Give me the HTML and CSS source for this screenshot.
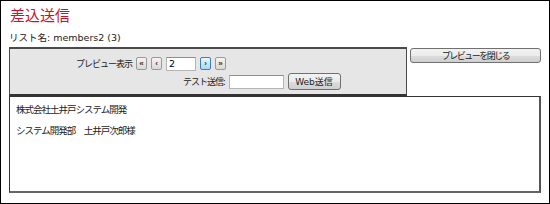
FILE: index.html
```html
<!DOCTYPE html>
<html lang="ja">
    <head>
        <meta charset="utf-8" />
        <title>差込送信</title>
        <link rel="stylesheet" href="styles.css">
    </head>
    <body>
        <div class="page">
            <h1 class="titre">差込送信</h1>
            <p class="liste">リスト名: members2 (3)</p>

            <div class="barre">
                <div class="panneau">
                    <div class="ligne ligne-apercu">
                        <span class="libelle">プレビュー表示</span>
                        <button class="mini">&laquo;</button>
                        <button class="mini">&lsaquo;</button>
                        <input class="champ champ-page" type="text" value="2">
                        <button class="mini actif">&rsaquo;</button>
                        <button class="mini">&raquo;</button>
                    </div>
                    <div class="ligne ligne-test">
                        <span class="libelle">テスト送信:</span>
                        <input class="champ champ-test" type="text">
                        <button class="bouton bouton-web">Web送信</button>
                    </div>
                </div>
                <button class="bouton bouton-fermer">プレビューを閉じる</button>
            </div>

            <div class="apercu">
                <p>株式会社土井戸システム開発</p>
                <p>システム開発部　土井戸次郎様</p>
            </div>
        </div>
    </body>
</html>
```

FILE: styles.css
```css
/* Normalisation
=============================================== */
* {
    margin: 0;
    padding: 0;
    box-sizing: border-box;
}

html,
body {
    width: 550px;
    height: 204px;
    background: #fff;
    font-family: "DejaVu Sans", "Noto Sans CJK JP", sans-serif;
    font-size: 10px;
    color: #222;
}

/* Cadre de la page */
.page {
    width: 550px;
    height: 204px;
    border: 1px solid #000;
    padding: 4px 0 0 8px;
}

.titre {
    font-family: "Noto Sans CJK JP", sans-serif;
    font-weight: normal;
    font-size: 15px;
    line-height: 20px;
    color: #d0112b;
    margin-left: 1px;
}

.liste {
    font-size: 9.5px;
    line-height: 14px;
    margin-top: 6px;
}

/* Barre : panneau gris + bouton fermer */
.barre {
    display: flex;
    align-items: flex-start;
    margin-top: 2px;
}

.panneau {
    width: 398px;
    height: 49px;
    background: #e6e6e6;
    border: 1px solid #4a4a4a;
    border-top-width: 2px;
    border-bottom: 2px solid #333;
    padding-top: 7px;
}

.ligne {
    display: flex;
    align-items: center;
    height: 15px;
}

.ligne-apercu {
    padding-left: 66px;
}

.ligne-test {
    padding-left: 173px;
    margin-top: 2px;
    height: 17px;
}

.libelle {
    font-family: "Noto Sans CJK JP", sans-serif;
    font-size: 9px;
    letter-spacing: -1px;
    color: #222;
    margin-right: 4px;
}

/* Petits boutons de navigation */
.mini {
    width: 11px;
    height: 13px;
    margin-right: 4px;
    font-size: 8px;
    line-height: 10px;
    font-weight: bold;
    color: #333;
    border: 1px solid #9a9a9a;
    border-radius: 2px;
    background: linear-gradient(#f4f4f4, #d8d8d8);
}

.mini.actif {
    border-color: #3c7fb1;
    background: linear-gradient(#eaf6fd, #a7d9f5);
}

.champ {
    height: 14px;
    border: 1px solid #b5b5b5;
    border-top-color: #8e8e8e;
    background: #fff;
    font-family: "DejaVu Sans", sans-serif;
    font-size: 9.5px;
    padding-left: 2px;
}

.champ-page {
    width: 30px;
    margin-right: 4px;
}

.champ-test {
    width: 55px;
    margin-right: 4px;
}

/* Boutons standards */
.bouton {
    font-family: "DejaVu Sans", "Noto Sans CJK JP", sans-serif;
    font-size: 9px;
    color: #222;
    border: 1px solid #707070;
    border-radius: 3px;
    background: linear-gradient(#f2f2f2 0%, #ebebeb 50%, #dddddd 51%, #cfcfcf 100%);
}

.bouton-web {
    width: 53px;
    height: 17px;
}

.bouton-fermer {
    width: 131px;
    height: 15px;
    margin-left: 3px;
    margin-top: 1px;
    font-family: "Noto Sans CJK JP", sans-serif;
    font-size: 9px;
    letter-spacing: -1.5px;
    line-height: 12px;
}

/* Zone d'aperçu du message */
.apercu {
    width: 532px;
    height: 97px;
    border: 1px solid #333;
    border-right: 2px solid #555;
    border-bottom: 2px solid #666;
    padding: 6px 0 0 6px;
    font-family: "Noto Sans CJK JP", sans-serif;
    font-size: 9.5px;
    letter-spacing: -1px;
    line-height: 12px;
}

.apercu p + p {
    margin-top: 9px;
}
```
